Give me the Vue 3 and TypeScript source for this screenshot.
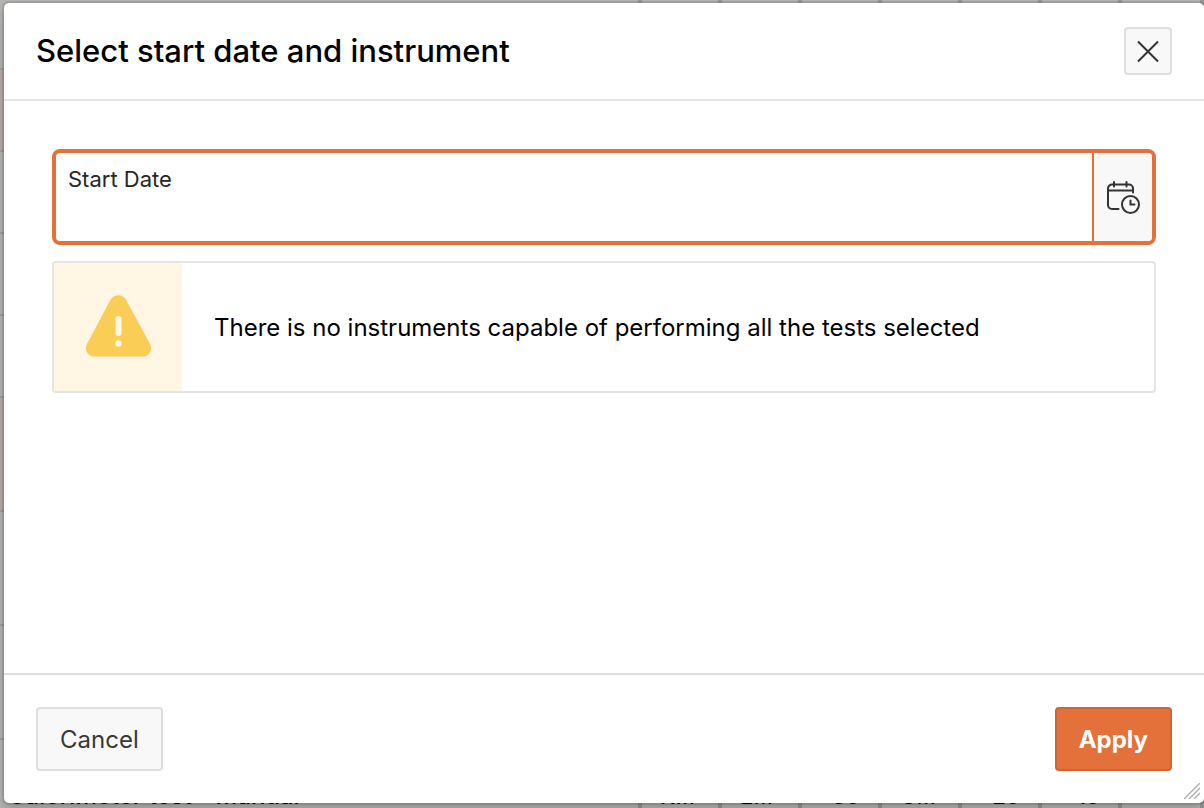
<script setup lang="ts">
import { ref } from 'vue'

interface GridRow {
  name: string
  cells: string[]
  kind: string
}

const blank = (kind: string): GridRow => ({ name: '', cells: ['', '', '', '', '', '', ''], kind })

const rows: GridRow[] = [
  blank('first'),
  blank('flagged'),
  blank('short'),
  blank('short'),
  blank('short'),
  blank('flagged tall'),
  blank('tall'),
  blank('tall'),
  { name: 'Calorimeter test - Manual', cells: ['K...', 'E...', '30', 'C...', '20', '10', ''], kind: 'tall' },
]

const startDate = ref('')
const isNumber = (text: string): boolean => /^\d+$/.test(text)
</script>

<template>
  <div class="page">
    <table class="grid" aria-hidden="true">
      <tbody>
        <tr v-for="(row, r) in rows" :key="r" :class="row.kind">
          <td class="name">{{ row.name }}</td>
          <td v-for="(cell, c) in row.cells" :key="c" :class="{ number: isNumber(cell) }">{{ cell }}</td>
        </tr>
      </tbody>
    </table>

    <section class="dialog" role="dialog" aria-labelledby="dialog-title">
      <header class="head">
        <h1 id="dialog-title">Select start date and instrument</h1>
        <button class="close" type="button" aria-label="Close">
          <svg width="24" height="24" viewBox="0 0 24 24" fill="none" stroke="#333" stroke-width="2">
            <path d="M2 2.500 22 22.500M22 2.500 2 22.500" />
          </svg>
        </button>
      </header>

      <div class="body">
        <div class="field">
          <div class="entry">
            <label for="start-date">Start Date</label>
            <input id="start-date" v-model="startDate" type="text" autocomplete="off" />
          </div>
          <button class="pick" type="button" aria-label="Choose date and time">
            <svg width="34" height="34" viewBox="0 0 34 34" fill="none" stroke="#333" stroke-width="2" stroke-linecap="round">
              <path d="M12.500 29H6a4 4 0 0 1-4-4V8.500a4 4 0 0 1 4-4H23a4 4 0 0 1 4 4v4M2 10.500H27M8 2V6.500M20.500 2V6.500" />
              <circle cx="24.500" cy="24.500" r="8.500" />
              <path d="M24.500 20.500V24.500H28.500" />
            </svg>
          </button>
        </div>

        <div class="alert" role="alert">
          <div class="badge">
            <svg width="68" height="64" viewBox="0 0 68 64">
              <path d="M26.500 4.800C30 -1.200 38.500 -1.200 42 4.800L65.800 48.500C69.300 55 65 61.500 58.500 61.500H10.500C4 61.500 -0.300 55 3.200 48.500Z" fill="#facd57" />
              <path d="M34.500 24V38" stroke="#fff7e4" stroke-width="6" stroke-linecap="round" />
              <circle cx="34.500" cy="48.500" r="3.200" fill="#fff7e4" />
            </svg>
          </div>
          <p>There is no instruments capable of performing all the tests selected</p>
        </div>
      </div>

      <footer class="foot">
        <button class="action" type="button">Cancel</button>
        <button class="action primary" type="button">Apply</button>
      </footer>

      <svg class="grip" width="16" height="16" viewBox="0 0 16 16" stroke="#aaa" stroke-width="1.300" aria-hidden="true">
        <path d="M0 16 16 0M5 16 16 5M10 16 16 10" />
      </svg>
    </section>
  </div>
</template>

<style>
html,
body {
  margin: 0;
  overflow: hidden;
}
</style>

<style scoped>
.page {
  position: relative;
  box-sizing: border-box;
  height: 100vh;
  padding: 3px 0 5px 4px;
  overflow: hidden;
  background: #b5b5b4;
  font-family: Inter, "Liberation Sans", sans-serif;
  color: #000;
}

.page *,
.page *::before {
  box-sizing: border-box;
}

.grid {
  position: absolute;
  top: 0;
  left: 0;
  width: 100%;
  table-layout: fixed;
  border-collapse: separate;
  border-spacing: 0;
  font-size: 22px;
  font-weight: 500;
  line-height: 28px;
}

.grid td {
  width: 80px;
  height: 82px;
  padding: 0 18px;
  border-right: 4px solid #979797;
  border-bottom: 2px solid #9f9f9e;
  white-space: nowrap;
}

.grid .name {
  width: 642px;
  padding: 0 8px;
  font-size: 24px;
}

.grid .number {
  text-align: right;
}

.grid td:last-child {
  width: auto;
}

.grid .first td {
  height: 70px;
}

.grid .tall td {
  height: 114px;
}

.grid .flagged {
  background: #b8ada7;
}

.dialog {
  position: relative;
  display: flex;
  flex-direction: column;
  height: 100%;
  border-radius: 5px;
  background: #fff;
  box-shadow: 0 0 0 2px rgba(0, 0, 0, 0.1), 0 6px 12px rgba(0, 0, 0, 0.2);
}

.head {
  display: flex;
  align-items: center;
  justify-content: space-between;
  padding: 24px 32px;
  border-bottom: 2px solid #e5e5e5;
}

h1 {
  margin: 0;
  font-size: 31px;
  font-weight: 500;
  line-height: 40px;
}

button {
  display: flex;
  align-items: center;
  justify-content: center;
  margin: 0;
  padding: 0;
  border: 2px solid #dedede;
  border-radius: 4px;
  background: #f8f8f8;
  color: #383838;
  font-family: inherit;
  cursor: pointer;
}

.close {
  width: 48px;
  height: 48px;
}

.body {
  display: flex;
  flex: 1;
  flex-direction: column;
  gap: 16px;
  padding: 48px;
}

.field {
  display: flex;
  height: 96px;
  border: 4px solid #e47139;
  border-radius: 8px;
  overflow: hidden;
}

.entry {
  display: flex;
  flex: 1;
  flex-direction: column;
  padding: 12px 12px 0;
}

label {
  color: #262626;
  font-size: 22px;
  line-height: 28px;
}

input {
  width: 100%;
  height: 40px;
  padding: 0;
  border: 0;
  outline: 0;
  background: transparent;
  font-family: inherit;
  font-size: 24px;
}

.pick {
  width: 60px;
  border-width: 0 0 0 2px;
  border-color: #e47139;
  border-radius: 0;
}

.alert {
  display: flex;
  align-items: center;
  border: 2px solid #e5e5e5;
  border-radius: 4px;
}

.badge {
  display: flex;
  align-items: center;
  justify-content: center;
  width: 128px;
  height: 128px;
  background: #fff7e4;
}

.alert p {
  margin: 0;
  padding: 2px 32px 0;
  font-size: 24px;
  line-height: 32px;
}

.foot {
  display: flex;
  justify-content: space-between;
  padding: 32px;
  border-top: 2px solid #dedede;
}

.action {
  height: 64px;
  padding: 2px 22px 0;
  font-size: 24px;
  line-height: 32px;
}

.primary {
  border-color: #cf6536;
  background: #e47139;
  color: #fff;
  font-weight: 700;
}

.grip {
  position: absolute;
  right: 4px;
  bottom: 4px;
}
</style>
